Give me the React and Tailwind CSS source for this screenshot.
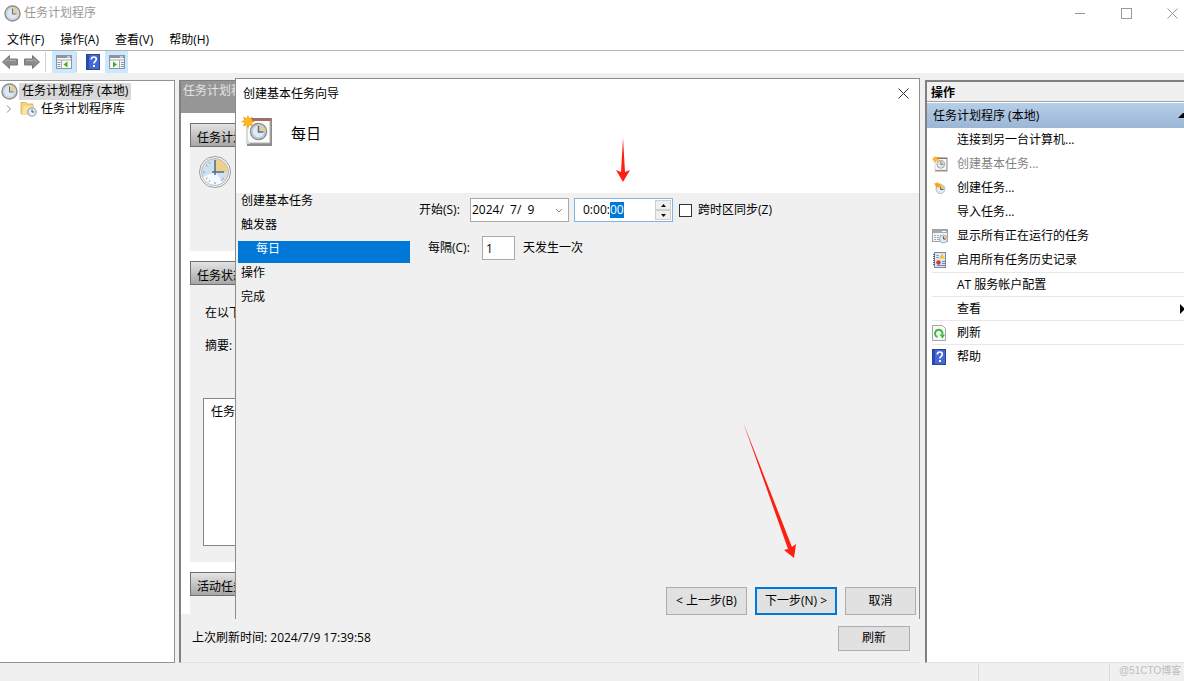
import React, { useEffect, useRef, useState } from "react";

// full-size dial, used beside the overview section
function DialIcon() {
  return (
    <svg viewBox="0 0 34 34" className="w-[34px] h-[34px]" aria-hidden="true">
      <circle cx="17" cy="17" r="15.5" fill="#fafafa" stroke="#9c9c9c" />
      <circle cx="17" cy="17" r="13.5" fill="#cfe1f1" stroke="#b5b5b5" />
      <path d="M17 17 L5 22 A13 13 0 0 0 25 27 Z" fill="#f4f9fd" />
      <path d="M17 17 V4 A13 13 0 0 1 30 17 Z" fill="#ecd08c" />
      <path
        d="M5 17h2M17 27v2M8 10l1.500 1M8 24l1.500-1M24 26l-1-1.500M11 27l1-1.500M26 24l-1.500-1M11 7l1 1.500"
        stroke="#7f9ab5"
      />
      <path d="M17 5v15M14 17h12" stroke="#4c6b8c" strokeWidth="1.500" fill="none" />
    </svg>
  );
}

function ClockIcon() {
  return (
    <svg viewBox="0 0 17 17" className="w-[17px] h-[17px]" aria-hidden="true">
      <circle cx="8.500" cy="8.500" r="7.500" fill="#dfe7ee" stroke="#8e8e8e" strokeWidth="1.500" />
      <circle cx="8.500" cy="8.500" r="5.800" fill="#dbe7f2" stroke="#bcc3ca" strokeWidth="0.800" />
      <path d="M8.500 8.500V3A5.500 5.500 0 0 1 14 8.500z" fill="#efcf85" />
      <path d="M8.500 3.500v5.500h4" stroke="#56708c" fill="none" />
    </svg>
  );
}

function ToolArrow({ flip }) {
  return (
    <svg viewBox="0 0 18 16" className={flip ? "w-[18px] h-4 -scale-x-100" : "w-[18px] h-4"} aria-hidden="true">
      <path d="M1.5 8 L8.5 1.5 V5 H16.5 V11 H8.5 V14.5 Z" fill="#8c8c8c" stroke="#7a7a7a" />
      <path d="M4 8 L8 5 M8 6.5 H15" stroke="#b0b0b0" fill="none" />
    </svg>
  );
}

function PaneIcon({ flip }) {
  return (
    <svg viewBox="0 0 16 14" className="w-4 h-[14px]" aria-hidden="true">
      <rect x="0.5" y="0.5" width="15" height="13" fill="#f7f7f7" stroke="#8d949c" />
      <path d="M1 1h14v2H1z" fill="#8d949c" />
      <path d="M11 2h3" stroke="#fff" />
      <path d="M1 5h14" stroke="#a7adb4" />
      <path d={flip ? "M10.5 5v8" : "M5.5 5v8"} stroke="#a7adb4" />
      <path d={flip ? "M12 7.5h3M12 9.5h3M12 11.5h3" : "M1.5 7.5h3M1.5 9.5h3M1.5 11.5h3"} stroke="#8d949c" />
      <path d={flip ? "M4 6.5 L8 9.5 L4 12.5 Z" : "M11.5 6.5 L7.5 9.5 L11.5 12.5 Z"} fill="#3fae2a" />
    </svg>
  );
}

function HelpIcon() {
  return (
    <svg viewBox="0 0 14 16" className="w-[14px] h-4" aria-hidden="true">
      <rect x="0.5" y="0.5" width="13" height="15" fill="#4469d6" stroke="#2b4596" />
      <path d="M1 1h2v14H1z" fill="#2c4bb0" />
      <path d="M5.3 5.6C5.3 3.8 6.4 3 7.8 3s2.5.9 2.5 2.3c0 2-2.4 2.1-2.4 4.3" stroke="#fff" strokeWidth="1.7" fill="none" />
      <rect x="7" y="11" width="2" height="2" fill="#fff" />
    </svg>
  );
}

function FolderIcon() {
  return (
    <svg viewBox="0 0 17 16" className="w-[17px] h-4" aria-hidden="true">
      <path d="M1 2 V13 H13 V3 H7 L6 1.5 H1 Z" fill="#f3d37c" stroke="#e0b95a" />
      <path d="M4 5h9v8H2z" fill="#fbe5a3" />
      <circle cx="12" cy="11" r="4.2" fill="#e3eef7" stroke="#8b97a2" />
      <path d="M12 8.5V11h2.2" stroke="#3f566e" fill="none" />
    </svg>
  );
}

function TaskIcon({ className }) {
  return (
    <svg viewBox="0 0 32 32" className={className} aria-hidden="true">
      <path d="M8 4h23v27H6V29z" fill="#8f8b8b" />
      <path d="M6 4h23v24H6z" fill="#fbfbfb" stroke="#b5b5b5" />
      <path d="M7 3h24l-1 3H7z" fill="#a06f60" />
      <path d="M4 28l3-4 2 5z" fill="#dedede" />
      <circle cx="17.500" cy="16.500" r="8" fill="#dbe6f0" stroke="#8b9095" strokeWidth="1.500" />
      <circle cx="17.500" cy="16.500" r="6.300" fill="#dfeaf4" stroke="#b8bec5" />
      <path d="M17.500 16.500V10a6.500 6.500 0 0 1 6.500 6.500z" fill="#efcf85" />
      <path d="M17.500 11v6h5" stroke="#56708c" strokeWidth="1.500" fill="none" />
      <path d="M7 0l1.200 3.200L11.600 1.800 10.600 5.200 14 6.500l-3.400 1.300 1.400 3.600-3.600-1.300L7 14l-1.400-3.900L2 11.400l1.400-3.600L0 6.500l3.400-1.300L2 1.800l3.600 1.400z" fill="#f59a14" />
      <circle cx="7" cy="6.800" r="3.800" fill="#ffbb22" />
    </svg>
  );
}

function NewTaskIcon() {
  return (
    <svg viewBox="0 0 16 16" className="w-4 h-4" aria-hidden="true">
      <circle cx="8.500" cy="9" r="4.500" fill="#e1ebf3" stroke="#b7c0c8" />
      <path d="M8.500 9V5a4 4 0 0 1 4 4z" fill="#edc467" />
      <path d="M8.500 6.500v3h3" stroke="#506a85" fill="none" />
      <path d="M2 3l2 .5L5.500 2l1 1.500 2.500 0-1 2 .5 2-2.500-.5L4 8.500 3.700 6z" fill="#f7a21b" />
    </svg>
  );
}

function RunningIcon() {
  return (
    <svg viewBox="0 0 16 16" className="w-4 h-4" aria-hidden="true">
      <rect x="0.5" y="1.5" width="15" height="12" fill="#f4f4f4" stroke="#9da3a9" />
      <path d="M1 2h14v3H1z" fill="#a3abb4" />
      <path d="M10 3.500h4" stroke="#fff" />
      <path d="M2 7.500h7M2 9.500h6M2 11.500h5" stroke="#a7adb4" strokeDasharray="2 1" />
      <circle cx="11.500" cy="11" r="4" fill="#dceaf5" stroke="#a5adb5" />
      <path d="M11.500 11V7.500a3.500 3.500 0 0 1 3.500 3.500z" fill="#efcf85" />
      <path d="M11.500 8.500V11H14" stroke="#3f566e" fill="none" />
    </svg>
  );
}

function HistoryIcon() {
  return (
    <svg viewBox="0 0 16 16" className="w-4 h-4" aria-hidden="true">
      <rect x="2.500" y="0.500" width="11" height="15" fill="#dde6f5" stroke="#7c869c" />
      <path d="M2 2v12" stroke="#5a6372" strokeWidth="2" strokeDasharray="1 1" />
      <path d="M10 1.500l3 5H7z" fill="#f7c325" />
      <circle cx="6.500" cy="10.500" r="2.200" fill="#d8362f" />
      <path d="M4.500 3.500h2M4.500 5.500h2M10 9.500h3M10 11.500h3M5 13.500h8" stroke="#6c88c0" />
    </svg>
  );
}

function RefreshIcon() {
  return (
    <svg viewBox="0 0 14 16" className="w-[14px] h-4" aria-hidden="true">
      <path d="M0.500 0.500h10l3 3v12h-13z" fill="#f8f8f8" stroke="#a4a4a4" />
      <path d="M5.500 12A3.700 3.700 0 1 1 10.300 9.500" stroke="#3fb83a" strokeWidth="2" fill="none" />
      <path d="M7.500 9.500H13L10.500 13.500z" fill="#3fb83a" />
    </svg>
  );
}

function CloseIcon() {
  return (
    <svg viewBox="0 0 11 11" className="w-[11px] h-[11px]" aria-hidden="true">
      <path d="M0.500 0.500l10 10M10.500 0.500l-10 10" stroke="currentColor" fill="none" />
    </svg>
  );
}

const menus = ["文件(F)", "操作(A)", "查看(V)", "帮助(H)"];

const steps = ["创建基本任务", "触发器", "每日", "操作", "完成"];

const actions = [
  { label: "连接到另一台计算机..." },
  { label: "创建基本任务...", icon: <TaskIcon className="w-4 h-4" />, disabled: true },
  { label: "创建任务...", icon: <NewTaskIcon /> },
  { label: "导入任务..." },
  { label: "显示所有正在运行的任务", icon: <RunningIcon /> },
  { label: "启用所有任务历史记录", icon: <HistoryIcon /> },
  { label: "AT 服务帐户配置", line: true },
  { label: "查看", line: true, sub: true },
  { label: "刷新", line: true, icon: <RefreshIcon /> },
  { label: "帮助", line: true, icon: <HelpIcon /> },
];

function SectionTitle({ children }) {
  return (
    <h3 className="h-6 pl-[6px] pt-1 border border-[#707070] bg-linear-to-b from-[#e4e4e4] to-[#a6a6a6] leading-5">
      {children}
    </h3>
  );
}

function Wizard() {
  const [date, setDate] = useState("2024/  7/  9");
  const [time, setTime] = useState("0:00:00");
  const [days, setDays] = useState("1");
  const [sync, setSync] = useState(false);
  const timeRef = useRef(null);

  // seconds are the active part of the time field
  useEffect(() => {
    timeRef.current.focus();
    timeRef.current.setSelectionRange(5, 7);
  }, []);

  const button = "h-7 bg-[#e1e1e1]";

  return (
    <div
      role="dialog"
      aria-label="创建基本任务向导"
      className="absolute left-[54px] right-0 -top-[3px] bottom-[43px] flex flex-col bg-[#f0f0f0] border border-b-0 border-[#8c8c8c]"
    >
      <header className="h-[114px] bg-white pl-[5px]">
        <div className="flex items-center justify-between h-[29px] pl-[2px] pr-[10px]">
          <h1>创建基本任务向导</h1>
          <button aria-label="关闭" className="text-[#333]">
            <CloseIcon />
          </button>
        </div>
        <div className="flex items-center gap-[18px] pt-[7px]">
          <TaskIcon className="w-8 h-8" />
          <h2 className="text-[15px] leading-5 pt-1">每日</h2>
        </div>
      </header>

      <div className="flex-1 flex">
        <ol className="w-[172px] ml-[2px]">
          {steps.map((s) => (
            <li
              key={s}
              className={
                s === "每日"
                  ? "h-[22px] mb-[2px] pl-[18px] leading-4 bg-[#0078d7] text-white"
                  : "h-6 pl-[3px] leading-4"
              }
            >
              {s}
            </li>
          ))}
        </ol>

        <div className="flex flex-col gap-[14px] pt-[5px] pl-[9px]">
          <div className="flex items-center h-6">
            <label htmlFor="start" className="w-[51px]">开始(S):</label>
            <div className="flex items-center w-[99px] h-6 border border-[#a8a8a8] bg-white">
              <input
                id="start"
                className="w-[84px] pl-[1px] outline-none"
                value={date}
                onChange={(e) => setDate(e.target.value)}
              />
              <button aria-label="选择日期">
                <svg viewBox="0 0 8 5" className="w-2 h-[5px]">
                  <path d="M1 1l3 3 3-3" stroke="#888" fill="none" />
                </svg>
              </button>
            </div>
            <div className="flex items-center w-[99px] h-6 ml-[5px] border border-[#7fb4e3] bg-white">
              <input
                ref={timeRef}
                aria-label="时间"
                className="w-[80px] pl-2 outline-none caret-transparent selection:bg-[#0078d7] selection:text-white"
                value={time}
                onChange={(e) => setTime(e.target.value)}
              />
              <div className="flex flex-col">
                <button aria-label="增加" className="flex items-center justify-center w-4 h-[10px] border border-[#cfcfcf] bg-[#f0f0f0]">
                  <svg viewBox="0 0 5 3" className="w-[5px] h-[3px]">
                    <path d="M0 3L2.500 0 5 3z" fill="#111" />
                  </svg>
                </button>
                <button aria-label="减少" className="flex items-center justify-center w-4 h-[10px] border border-[#cfcfcf] bg-[#f0f0f0]">
                  <svg viewBox="0 0 5 3" className="w-[5px] h-[3px]">
                    <path d="M0 0L2.500 3 5 0z" fill="#111" />
                  </svg>
                </button>
              </div>
            </div>
            <label className="flex items-center gap-[6px] ml-[6px]">
              <input
                type="checkbox"
                className="appearance-none w-[13px] h-[13px] border border-[#333] bg-white checked:bg-[#0078d7]"
                checked={sync}
                onChange={(e) => setSync(e.target.checked)}
              />
              跨时区同步(Z)
            </label>
          </div>

          <div className="flex items-center h-6 pl-[9px]">
            <label htmlFor="days" className="w-[54px]">每隔(C):</label>
            <input
              id="days"
              className="w-[33px] h-6 pl-[3px] mr-2 border border-[#a8a8a8] bg-white outline-none"
              value={days}
              onChange={(e) => setDays(e.target.value)}
            />
            <span>天发生一次</span>
          </div>
        </div>
      </div>

      <footer className="flex justify-end gap-2 pr-[3px] pb-1">
        <button className={`${button} w-[81px] border border-[#adadad]`}>&lt; 上一步(B)</button>
        <button className={`${button} w-[82px] border-2 border-[#0078d7]`}>下一步(N) &gt;</button>
        <button className={`${button} w-[71px] border border-[#adadad]`}>取消</button>
      </footer>

      <svg viewBox="0 0 16 44" className="absolute left-[379px] top-[59px] w-4 h-11" aria-hidden="true">
        <path d="M8 0 L10 34 L15 32 L8 44 L1 32 L6 34 Z" fill="#ff1f12" />
      </svg>
      <svg viewBox="0 0 54 138" className="absolute right-[122px] bottom-[60px] w-[54px] h-[138px]" aria-hidden="true">
        <path d="M0 1 L49 126 L53 123 L51 137 L41 129 L45 128 Z" fill="#ff1f12" />
      </svg>
    </div>
  );
}

export default function App() {
  return (
    <div className="flex flex-col min-h-screen bg-white text-[12px] leading-4 text-black font-['Open_Sans','Noto_Sans_CJK_SC',sans-serif] overflow-x-hidden">
      <header className="flex items-center justify-between h-[26px] pl-1 pr-[6px] text-[#999]">
        <div className="flex items-center gap-[3px]">
          <ClockIcon />
          <span>任务计划程序</span>
        </div>
        <div className="flex items-center gap-[35px]">
          <button aria-label="最小化">
            <svg viewBox="0 0 11 11" className="w-[11px] h-[11px]">
              <path d="M0 5.500h10" stroke="currentColor" />
            </svg>
          </button>
          <button aria-label="最大化">
            <svg viewBox="0 0 11 11" className="w-[11px] h-[11px]">
              <rect x="0.500" y="0.500" width="10" height="10" stroke="currentColor" fill="none" />
            </svg>
          </button>
          <button aria-label="关闭窗口">
            <CloseIcon />
          </button>
        </div>
      </header>

      <nav className="flex items-center gap-4 h-[25px] pl-[7px] pt-[3px] border-b border-[#b4b4b4]">
        {menus.map((m) => (
          <button key={m}>{m}</button>
        ))}
      </nav>

      <div className="flex items-center h-[22px] pl-[1px]">
        <button aria-label="后退">
          <ToolArrow />
        </button>
        <button aria-label="前进" className="ml-1">
          <ToolArrow flip />
        </button>
        <span className="w-[1px] h-5 ml-1 mr-[6px] bg-[#d0d0d0]" />
        <button aria-label="控制台树" className="flex items-center justify-center w-6 h-[22px] bg-[#cce8ff]">
          <PaneIcon />
        </button>
        <span className="w-[1px] h-5 mr-[9px] bg-[#d0d0d0]" />
        <button aria-label="帮助">
          <HelpIcon />
        </button>
        <button aria-label="操作窗格" className="flex items-center justify-center w-[23px] h-[22px] ml-[5px] bg-[#cce8ff]">
          <PaneIcon flip />
        </button>
      </div>

      <main className="flex-1 flex pt-[7px] bg-[#f0f0f0]">
        <aside className="w-[175px] pt-[1px] bg-white border-y border-r border-[#8f939c]">
          <div className="flex items-center h-[18px] pl-[1px] gap-[1px]">
            <ClockIcon />
            <span className="h-[17px] px-[3px] bg-[#d9d9d9]">任务计划程序 (本地)</span>
          </div>
          <div className="flex items-center h-[18px] pl-[6px]">
            <svg viewBox="0 0 6 8" className="w-[6px] h-2 mr-2" aria-hidden="true">
              <path d="M1 0.500L4.500 4 1 7.500" stroke="#8a8a8a" fill="none" />
            </svg>
            <FolderIcon />
            <span className="pl-1">任务计划程序库</span>
          </div>
        </aside>

        <section className="relative flex-1 min-w-0 flex flex-col ml-1 border-l-2 border-t border-b border-[#808080] border-b-[#e2e2e2]">
          <div className="h-8 pl-[2px] pt-[2px] bg-[#969696] text-[#e4e4e4]">任务计划程</div>
          <div className="flex-1 flex flex-col gap-[10px] pt-[10px] pl-[9px] bg-white">
            <div className="h-[128px] bg-[#f0f0f0]">
              <SectionTitle>任务计划</SectionTitle>
              <div className="pl-2 pt-2">
                <DialIcon />
              </div>
            </div>
            <div className="h-[301px] bg-[#f0f0f0]">
              <SectionTitle>任务状态</SectionTitle>
              <p className="pl-[15px] pt-5">在以下</p>
              <p className="pl-[15px] pt-[17px]">摘要:</p>
              <div className="h-[148px] ml-[13px] mt-11 pl-[7px] pt-[5px] bg-white border border-[#828790]">任务</div>
            </div>
            <div className="flex-1 bg-[#f0f0f0]">
              <SectionTitle>活动任务</SectionTitle>
            </div>
          </div>
          <div className="flex items-center justify-between h-12 pl-[11px] pr-[10px]">
            <span>上次刷新时间: 2024/7/9 17:39:58</span>
            <button className="w-[72px] h-[25px] bg-[#e1e1e1] border border-[#adadad]">刷新</button>
          </div>
          <Wizard />
        </section>

        <aside className="w-[259px] ml-[5px] bg-white border-t-2 border-l-2 border-b border-[#808080] border-b-[#e2e2e2]">
          <h2 className="h-5 pl-1 pt-[3px] font-bold bg-[#f0f0f0] border-b border-[#a0a0a0]">操作</h2>
          <div className="flex items-center justify-between h-[25px] mt-[1px] pl-[6px] bg-linear-to-b from-[#b5cfe8] to-[#9bb5d5]">
            <span>任务计划程序 (本地)</span>
            <svg viewBox="0 0 6 5" className="w-[6px] h-[5px]" aria-hidden="true">
              <path d="M0 5L5 0H6V5z" fill="#000" />
            </svg>
          </div>
          <ul className="pl-[5px]">
            {actions.map((a) => (
              <li key={a.label} className={a.line ? "h-6 border-t border-[#e8e8e8]" : "h-6"}>
                <button
                  disabled={a.disabled}
                  className="flex items-center w-full h-full text-left disabled:text-[#838383]"
                >
                  <span className="w-[25px]">{a.icon}</span>
                  <span className="flex-1">{a.label}</span>
                  {a.sub && (
                    <svg viewBox="0 0 4 10" className="w-1 h-[10px]" aria-hidden="true">
                      <path d="M0 0L4 4V6L0 10z" fill="#000" />
                    </svg>
                  )}
                </button>
              </li>
            ))}
          </ul>
        </aside>
      </main>

      <footer className="flex justify-end h-[18px] bg-[#f0f0f0] font-['Liberation_Sans','Noto_Sans_CJK_SC',sans-serif]">
        <span className="w-[131px] border-l border-[#dcdcdc]" />
        <span className="w-[75px] pl-[9px] border-l border-[#dcdcdc] text-[10px] text-[#bdbdbd]">@51CTO博客</span>
      </footer>
    </div>
  );
}
